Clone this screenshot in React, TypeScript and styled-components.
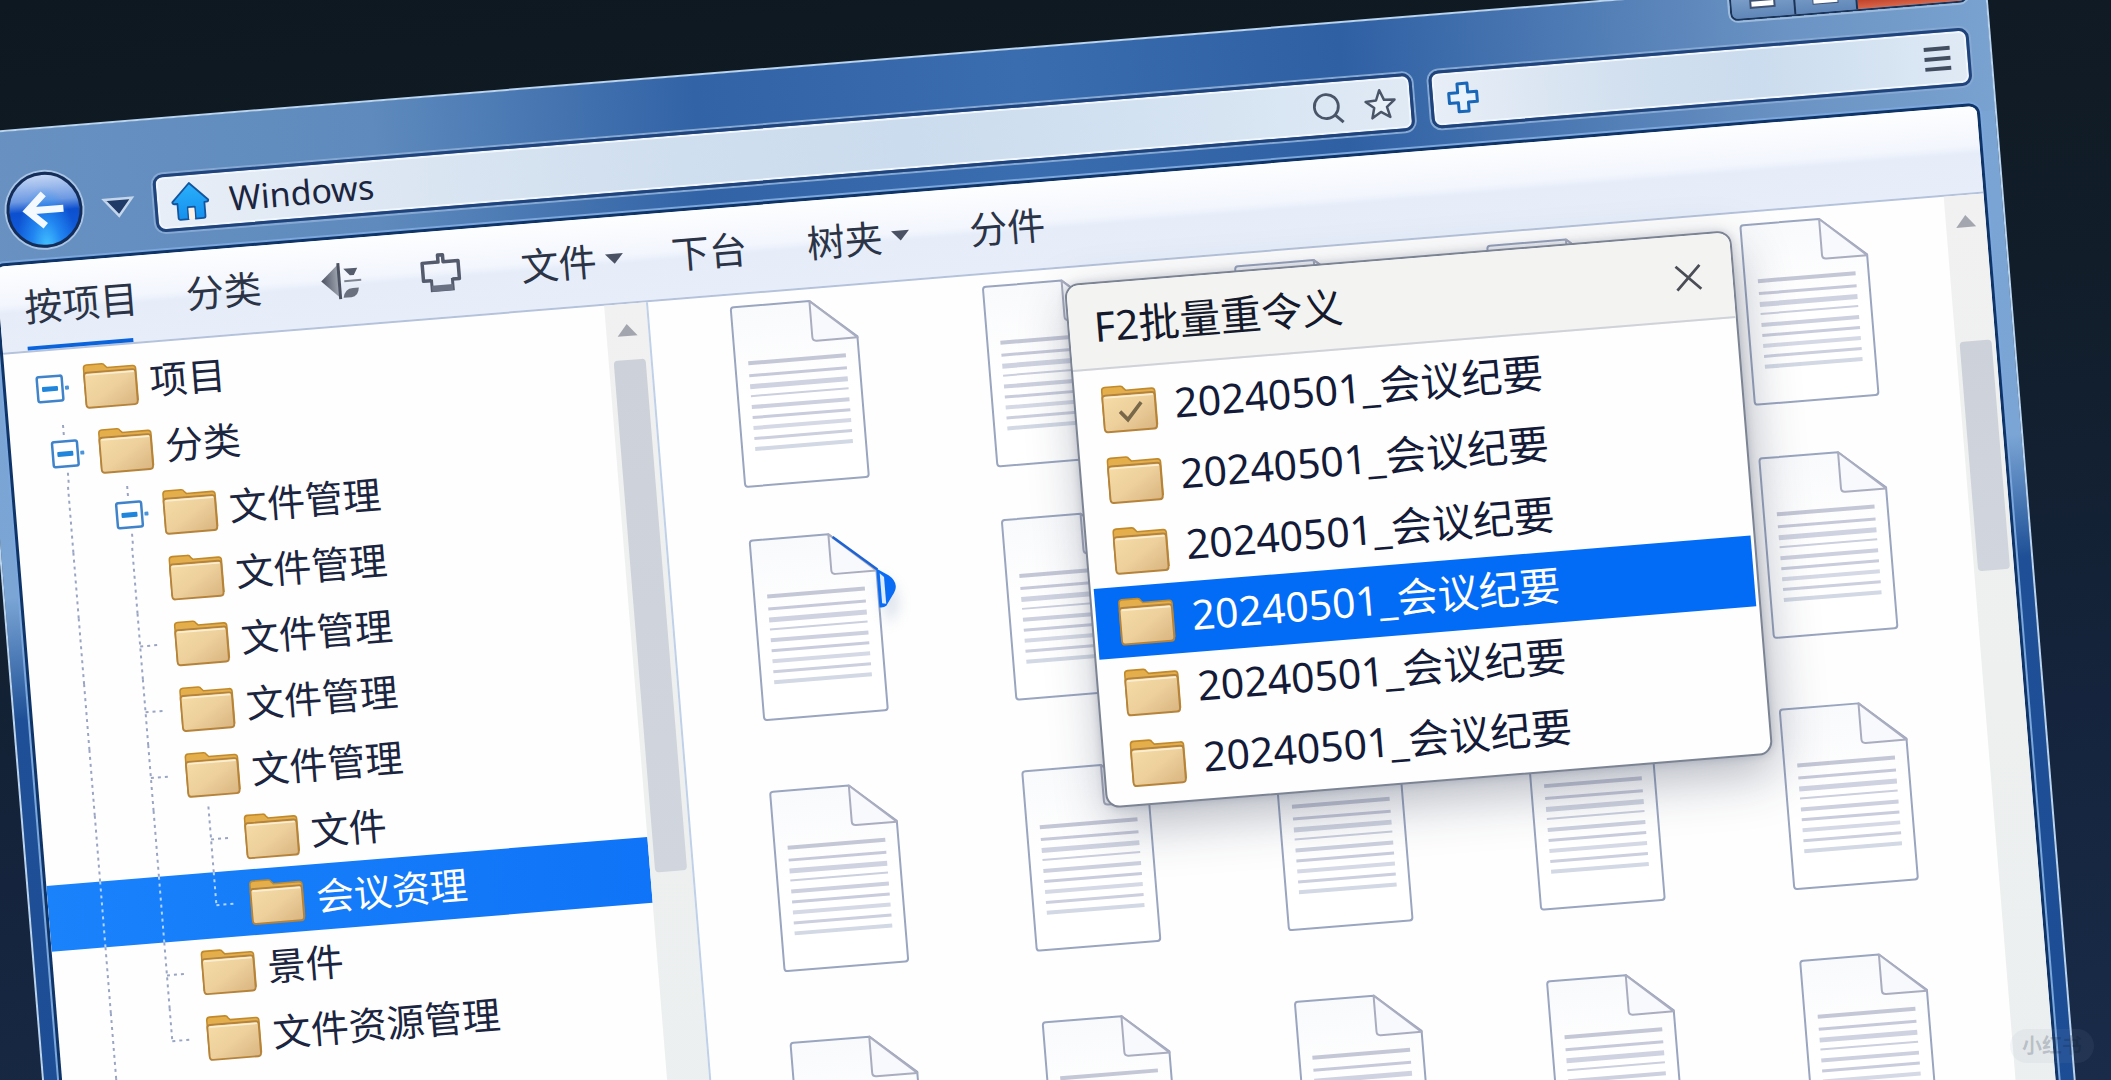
import React from "react";
import styled, { createGlobalStyle } from "styled-components";

const GlobalStyle = createGlobalStyle`
  * { box-sizing: border-box; }
  html, body { margin: 0; padding: 0; background: #131f2e; }
  body, button, input {
    font-family: "Noto Sans", "Noto Sans CJK SC", sans-serif;
    color: #1b2540;
  }
  button { background: none; border: 0; padding: 0; margin: 0; cursor: pointer; }
  ul { list-style: none; margin: 0; padding: 0; }
  svg { display: block; flex: none; overflow: visible; }
`;

const Desktop = styled.main`
  position: relative;
  height: 100vh;
  overflow: hidden;
  background: linear-gradient(175deg, #0e1820 0%, #111d29 35%, #15243c 70%, #192b49 100%);
`;

const Frame = styled.section`
  display: flex;
  flex-direction: column;
  width: 96vw;
  min-height: 110vh;
  margin: 133px 0 0 -35px;
  padding: 0 18px;
  transform-origin: 0 0;
  transform: rotate(-4.65deg);
  border: solid #b9d4f0;
  border-width: 2px 2px 0;
  background:
    linear-gradient(90deg, #6992c2 0%, #5e8abd 20%, #3263a6 36%, #3a6cb0 52%, #2f60a4 68%, #6b93c3 90%, #7aa2d0 100%) 0 0 / 100% 140px no-repeat,
    linear-gradient(180deg, #78a3d3 0%, #7aa5d5 38%, #1f5097 48%, #1c4d94 100%);
`;

const Caption = styled.header`
  display: flex;
  justify-content: flex-end;
  height: 30px;
  margin-bottom: 25px;
`;

const CaptionGroup = styled.div`
  display: flex;
  overflow: hidden;
  border: 2px solid #1b3357;
  border-top: 0;
  border-radius: 0 0 8px 8px;
  box-shadow: 0 0 0 2px #9dbbdc;
`;

const CaptionButton = styled.button<{ $danger?: boolean }>`
  display: grid;
  place-items: center;
  width: ${(p) => (p.$danger ? 110 : 62)}px;
  background: ${(p) => (p.$danger ? "linear-gradient(#e0907a, #c2452c 70%, #d8674c)" : "linear-gradient(#86a8cf, #5f86b8)")};
  & + & { border-left: 2px solid #1b3357; }
`;

const NavRow = styled.nav`
  display: flex;
  align-items: center;
  gap: 20px;
  height: 58px;
  margin-bottom: 21px;
  padding: 0 2px 0 15px;
`;

const BackButton = styled.button`
  display: grid;
  place-items: center;
  flex: none;
  width: 76px;
  height: 76px;
  margin-bottom: 6px;
  border: 3px solid #142c58;
  border-radius: 50%;
  box-shadow: 0 0 0 2px #a9c4e4;
  background:
    radial-gradient(ellipse at 50% 105%, #45c4ff 0%, rgba(40, 150, 250, 0.7) 30%, rgba(20, 90, 220, 0) 60%),
    linear-gradient(180deg, #c3d6f4 0%, #6d99e2 36%, #0c4fcf 52%, #1263e0 100%);
`;

const HistoryButton = styled.button`
  display: grid;
  place-items: center;
  flex: none;
  width: 32px;
  height: 32px;
`;

const Bars = styled.div`
  display: grid;
  flex: 1;
  grid-template-columns: minmax(0, 7fr) minmax(0, 3fr);
  gap: 17px;
`;

const Bar = styled.div`
  display: flex;
  align-items: center;
  gap: 20px;
  height: 58px;
  padding: 0 14px;
  border: 3px solid #1f437a;
  border-radius: 10px;
  box-shadow: 0 0 0 2px #86a9d3, inset 0 0 0 2px #f2f7fd;
  background: linear-gradient(90deg, #e8eef7 0%, #d2e0ef 35%, #cbdcee 60%, #d6e4f2 85%, #e0eaf5 100%);
`;

const BarInput = styled.input`
  flex: 1;
  min-width: 0;
  padding: 0;
  border: 0;
  outline: 0;
  background: transparent;
  font-size: 34px;
  line-height: 48px;
`;

const BarButton = styled.button`
  display: grid;
  place-items: center;
  width: 32px;
  height: 32px;
  flex: none;
`;

const Content = styled.div`
  display: flex;
  flex: 1;
  flex-direction: column;
  overflow: hidden;
  border-radius: 8px 8px 0 0;
  box-shadow: 0 0 0 3px #0f3468, 0 0 0 5px #7ba7dc;
  background: #fefefe;
`;

const Toolbar = styled.div`
  display: flex;
  align-items: stretch;
  height: 88px;
  flex: none;
  padding-left: 25px;
  border-bottom: 2px solid #b4c2db;
  background: linear-gradient(180deg, #fdfeff 0%, #f3f6fd 45%, #e6edf9 55%, #e7eefa 100%);
`;

const Tool = styled.button<{ $lead: number; $active?: boolean }>`
  display: flex;
  align-items: center;
  gap: 9px;
  margin-left: ${(p) => p.$lead}px;
  padding-bottom: 2px;
  font-size: 38px;
  line-height: 48px;
  color: #2b3447;
  background: ${(p) => (p.$active ? "linear-gradient(#0b63dc, #0b63dc) 0 100% / 106px 4px no-repeat" : "none")};
`;

const Body = styled.div`
  position: relative;
  display: flex;
  flex: 1;
  min-height: 0;
`;

const TreePane = styled.aside`
  flex: none;
  width: 603px;
  padding-top: 5px;
`;

const TreeRow = styled.li<{ $selected?: boolean }>`
  display: flex;
  align-items: center;
  height: 66px;
  background: ${(p) => (p.$selected ? "linear-gradient(90deg, #1a82fb, #0f74f7)" : "transparent")};
  color: ${(p) => (p.$selected ? "#fff" : "#1b2540")};
`;

const Expander = styled.button`
  flex: none;
  margin-right: 20px;
`;

const TreeLabel = styled.span`
  margin-left: 12px;
  padding-bottom: 2px;
  font-size: 38px;
  line-height: 48px;
  white-space: nowrap;
`;

const Scroll = styled.div<{ $width: number; $line?: boolean }>`
  display: flex;
  flex: none;
  flex-direction: column;
  align-items: center;
  width: ${(p) => p.$width}px;
  padding-top: 20px;
  gap: 24px;
  border-right: ${(p) => (p.$line ? "2px solid #bfd0e8" : "0")};
  background: linear-gradient(180deg, #f0f1f0, #ebefef);
`;

const Thumb = styled.div<{ $top: number; $length: number }>`
  width: 32px;
  height: ${(p) => p.$length}px;
  margin-top: ${(p) => p.$top}px;
  border-radius: 4px;
  background: linear-gradient(180deg, #cdd1d9, #d1d6de);
`;

const FilesPane = styled.div`
  flex: 1;
  min-width: 0;
  overflow: hidden;
`;

const FileGrid = styled.ul`
  display: grid;
  grid-template-columns: repeat(5, 126px);
  grid-auto-rows: 252px;
  grid-template-rows: 234px;
  justify-content: space-between;
  padding: 11px 80px 0 81px;
`;

const Dialog = styled.div`
  position: absolute;
  top: 16px;
  right: 255px;
  width: 669px;
  overflow: hidden;
  border: 2px solid #7c8494;
  border-radius: 14px;
  background: #fefefe;
  box-shadow: 4px 18px 50px rgba(40, 52, 78, 0.34), 0 0 8px rgba(40, 52, 78, 0.2);
`;

const DialogHead = styled.div`
  display: flex;
  align-items: center;
  justify-content: space-between;
  height: 86px;
  padding: 0 28px 0 25px;
  border-bottom: 2px solid #cfd2d8;
  background: #f3f3f2;
`;

const DialogTitle = styled.h1`
  margin: 0;
  font-size: 41px;
  font-weight: 400;
  line-height: 50px;
  color: #14192b;
`;

const DialogList = styled.ul`
  padding: 5px 3px;
`;

const DialogRow = styled.li<{ $selected?: boolean }>`
  display: flex;
  align-items: center;
  gap: 18px;
  height: 71px;
  padding-left: 23px;
  font-size: 41px;
  line-height: 50px;
  white-space: nowrap;
  background: ${(p) => (p.$selected ? "#036cf6" : "transparent")};
  color: ${(p) => (p.$selected ? "#fff" : "#141b38")};
`;

const RowText = styled.span`
  padding-bottom: 6px;
`;

const Watermark = styled.div`
  position: absolute;
  right: 17px;
  bottom: 17px;
  padding: 0 12px;
  border-radius: 17px;
  background: rgba(140, 160, 190, 0.09);
  color: rgba(8, 20, 44, 0.2);
  font-size: 20px;
  font-weight: 700;
  line-height: 34px;
`;

const Folder = ({ width = 54, height = 45, checked = false }: { width?: number; height?: number; checked?: boolean }) => (
  <svg width={width} height={height} viewBox="0 0 53 43" preserveAspectRatio="none" aria-hidden="true">
    <path d="M1 4Q1 1 4 1H19Q21 1 22 3L24 5H49Q52 5 52 8V38H1Z" fill="url(#folderTab)" stroke="#c08a2c" strokeWidth="1.5" />
    <path d="M1 11Q1 8.500 4 8.500H48.500Q51.500 8.500 51.500 11V39Q51.500 42 48.500 42H4Q1 42 1 39Z" fill="url(#folderFace)" stroke="#b5833a" strokeWidth="1.800" />
    <path d="M3 10.500H50" stroke="#fbeed2" strokeWidth="1.600" />
    {checked && <path d="M17 24L24 32L38 17" fill="none" stroke="#786749" strokeWidth="3.500" />}
  </svg>
);

const Minus = () => (
  <svg width="28" height="28" viewBox="0 0 28 28" aria-hidden="true">
    <rect x="1.500" y="1.500" width="25" height="25" rx="2" fill="#fff" stroke="#3f83cb" strokeWidth="2.500" />
    <rect x="6" y="11.500" width="16" height="5" rx="1" fill="#1f86dc" />
    <rect x="29" y="12" width="4" height="4" rx="1" fill="#4a94dc" />
  </svg>
);

type Guide = { x: number; from?: number; to?: number; stub?: boolean };

const Guides = ({ width, lines, light }: { width: number; lines: Guide[]; light?: boolean }) => (
  <svg width={width} height="66" viewBox={`0 0 ${width} 66`} aria-hidden="true">
    <g stroke={light ? "#b5d4fb" : "#9aa5c4"} strokeWidth="2" strokeDasharray="3 4" fill="none">
      {lines.map((l) => (
        <React.Fragment key={l.x}>
          <path d={`M${l.x} ${l.from ?? 0}V${l.to ?? 66}`} />
          {l.stub && <path d={`M${l.x} 33h20`} />}
        </React.Fragment>
      ))}
    </g>
  </svg>
);

const A = 54;
const B = 113;
const C = 168;

type Node = { label: string; indent: number; open?: boolean; selected?: boolean; lines: Guide[] };

const nodes: Node[] = [
  { label: "项目", indent: 30, open: true, lines: [] },
  { label: "分类", indent: 40, open: true, lines: [{ x: A, from: 4, to: 14 }, { x: A + 1, from: 52 }] },
  { label: "文件管理", indent: 99, open: true, lines: [{ x: A }, { x: B, from: 4, to: 16 }, { x: B + 1, from: 52 }] },
  { label: "文件管理", indent: 148, lines: [{ x: A }, { x: B }] },
  { label: "文件管理", indent: 148, lines: [{ x: A }, { x: B, stub: true }] },
  { label: "文件管理", indent: 148, lines: [{ x: A }, { x: B, stub: true }] },
  { label: "文件管理", indent: 148, lines: [{ x: A }, { x: B, stub: true }] },
  { label: "文件", indent: 202, lines: [{ x: A }, { x: B }, { x: C, stub: true }] },
  { label: "会议资理", indent: 202, selected: true, lines: [{ x: A }, { x: B }, { x: C, to: 33, stub: true }] },
  { label: "景件", indent: 148, lines: [{ x: A }, { x: B, stub: true }] },
  { label: "文件资源管理", indent: 148, lines: [{ x: A }, { x: B, to: 33, stub: true }] },
  { label: "", indent: 148, lines: [{ x: A }] },
];

const textLines = [
  [57, 4, "#c4c7d6"], [70, 3, "#c6c9d9"], [80, 5, "#cfd3e1"], [91, 2, "#cbcfde"], [101, 4, "#cdd1df"],
  [112, 3, "#c8ccdc"], [122, 4, "#d5d9e5"], [133, 3, "#cbcfde"], [143, 4, "#d2d8e4"],
] as const;

const Doc = ({ dragged = false }: { dragged?: boolean }) => (
  <svg width="126" height="182" viewBox="0 0 126 182" role="img" aria-label="document">
    <path d="M4 1H80L125 40V178Q125 181 122 181H4Q1 181 1 178V4Q1 1 4 1Z" fill="url(#paper)" stroke="#9aa5bf" strokeWidth="2" strokeLinejoin="round" />
    <path d="M80 1V37Q80 41 84 41H125Z" fill="#f7f9fc" stroke="#a9adbf" strokeWidth="2" strokeLinejoin="round" />
    {textLines.map(([y, h, fill]) => (
      <rect key={y} x="14" y={y - 1} width="98" height={h} fill={fill} />
    ))}
    {dragged && (
      <g>
        <path d="M126 46Q150 60 142 84L132 96Z" fill="#6b86b0" opacity="0.25" filter="url(#soft)" />
        <path d="M84 4L126 40" stroke="#1d63d6" strokeWidth="2.500" />
        <path d="M125 39L137 47Q143 52 143 58Q143 62 139 67L132 77Q129 79 125 78Z" fill="#0a6cf5" />
        <path d="M128 44V74L132 75V48Z" fill="#dcebff" />
      </g>
    )}
  </svg>
);

const Down = ({ width = 18, height = 10, fill = "#4a5264", stroke = "none" }: { width?: number; height?: number; fill?: string; stroke?: string }) => (
  <svg width={width} height={height} viewBox="0 0 18 10" preserveAspectRatio="none" aria-hidden="true">
    <path d="M0 0H18L9 10Z" fill={fill} stroke={stroke} strokeWidth="1.500" />
  </svg>
);

const Up = () => (
  <svg width="20" height="12" viewBox="0 0 20 12" aria-hidden="true">
    <path d="M10 0L20 12H0Z" fill="#a3a6ae" />
  </svg>
);

const dialogRows = [0, 1, 2, 3, 4, 5];
const docs = Array.from({ length: 20 }, (_, i) => i);

const Defs = styled.svg`
  position: absolute;
`;

export default function App() {
  return (
    <Desktop>
      <GlobalStyle />
      <Defs width="0" height="0" aria-hidden="true">
        <defs>
          <linearGradient id="folderTab" x1="0" y1="0" x2="0" y2="1">
            <stop offset="0" stopColor="#e6ae45" />
            <stop offset="0.3" stopColor="#e0ae58" />
          </linearGradient>
          <linearGradient id="folderFace" x1="0" y1="0" x2="1" y2="1">
            <stop offset="0" stopColor="#f6dca6" />
            <stop offset="0.5" stopColor="#edd09c" />
            <stop offset="1" stopColor="#d9b480" />
          </linearGradient>
          <linearGradient id="paper" x1="0" y1="0" x2="0" y2="1">
            <stop offset="0" stopColor="#f9fafc" />
            <stop offset="0.5" stopColor="#ffffff" />
          </linearGradient>
          <linearGradient id="house" x1="0" y1="0" x2="0" y2="1">
            <stop offset="0" stopColor="#2bb0fb" />
            <stop offset="1" stopColor="#1590ee" />
          </linearGradient>
          <linearGradient id="steel" x1="0" y1="0" x2="1" y2="0">
            <stop offset="0" stopColor="#4b5160" />
            <stop offset="1" stopColor="#a2a7b3" />
          </linearGradient>
          <filter id="soft" x="-100%" y="-100%" width="300%" height="300%">
            <feGaussianBlur stdDeviation="7" />
          </filter>
        </defs>
      </Defs>

      <Frame>
        <Caption>
          <CaptionGroup>
            <CaptionButton aria-label="Minimize">
              <svg width="26" height="9" viewBox="0 0 26 9"><rect x="1" y="1" width="24" height="7" fill="#fff" stroke="#3f5273" strokeWidth="2" /></svg>
            </CaptionButton>
            <CaptionButton aria-label="Maximize">
              <svg width="26" height="14" viewBox="0 0 26 14"><rect x="3" y="1" width="20" height="9" fill="#5c7ca8" stroke="#3f5273" strokeWidth="6" /><rect x="3" y="1" width="20" height="9" fill="none" stroke="#fff" strokeWidth="4" /></svg>
            </CaptionButton>
            <CaptionButton $danger aria-label="Close" />
          </CaptionGroup>
        </Caption>

        <NavRow>
          <BackButton aria-label="Back">
            <svg width="42" height="38" viewBox="0 0 42 38">
              <path d="M21 3L4 19L21 35M5 19H40" fill="none" stroke="#f4f9ff" strokeWidth="7" />
            </svg>
          </BackButton>
          <HistoryButton aria-label="History">
            <Down width={28} height={17} fill="#1f3a66" stroke="#c4d6ec" />
          </HistoryButton>
          <Bars>
            <Bar>
              <svg width="38" height="38" viewBox="0 0 38 38" aria-hidden="true">
                <path d="M19 1L37 19Q37 21 35 21H33V35Q33 37 31 37H23V25H16V37H8Q6 37 6 35V21H3Q1 21 1 19Z" fill="url(#house)" stroke="#14549c" strokeWidth="1.800" strokeLinejoin="round" />
                <rect x="16.500" y="26" width="6" height="11" fill="#fdf1e6" />
              </svg>
              <BarInput aria-label="Address" defaultValue="Windows" />
              <BarButton aria-label="Search">
                <svg width="32" height="32" viewBox="0 0 32 32"><circle cx="14" cy="14" r="12" fill="none" stroke="#4a5568" strokeWidth="2.800" /><path d="M22 23L30 31" stroke="#4a5568" strokeWidth="3" /></svg>
              </BarButton>
              <BarButton aria-label="Favorite">
                <svg width="32" height="32" viewBox="0 0 32 32"><path d="M16 2L20 12L30.500 12.600L22.400 19.300L25 29.500L16 23.800L7 29.500L9.600 19.300L1.500 12.600L12 12Z" fill="#e8f0f8" stroke="#4a5568" strokeWidth="2.500" strokeLinejoin="round" /></svg>
              </BarButton>
            </Bar>
            <Bar>
              <svg width="32" height="32" viewBox="0 0 32 32" aria-hidden="true">
                <path d="M11 2H21V11H30V21H21V30H11V21H2V11H11Z" fill="#e9f3fd" stroke="#1867b8" strokeWidth="3" strokeLinejoin="round" />
              </svg>
              <BarInput aria-label="Search box" />
              <BarButton aria-label="Menu">
                <svg width="26" height="24" viewBox="0 0 26 24"><path d="M0 2H26M0 12H26M0 22H26" stroke="#434d60" strokeWidth="4" /></svg>
              </BarButton>
            </Bar>
          </Bars>
        </NavRow>

        <Content>
          <Toolbar>
            <Tool $lead={0} $active>按项目</Tool>
            <Tool $lead={48}>分类</Tool>
            <Tool $lead={60} aria-label="Sort">
              <svg width="40" height="36" viewBox="0 0 40 36">
                <path d="M0 17L18 1V35Z" fill="url(#steel)" />
                <path d="M18 0V36" stroke="#4b5160" strokeWidth="3" />
                <path d="M23 6H37L33 13H29Z" fill="#555c6b" />
                <path d="M23 18.500H40" stroke="#7e8491" strokeWidth="2" />
                <path d="M21 35Q23 26 31 26H37Q36 35 29 35Z" fill="#6a707e" />
              </svg>
            </Tool>
            <Tool $lead={60} aria-label="Add-in">
              <svg width="40" height="38" viewBox="0 0 40 38">
                <path d="M10 26H2V8H18V1H23V8H38V26H31" fill="none" stroke="#535b6c" strokeWidth="3.500" strokeLinejoin="round" />
                <path d="M10 25V36H31V25" fill="none" stroke="#535b6c" strokeWidth="3" />
                <path d="M10 31H31V37H10Z" fill="#6a7183" />
              </svg>
            </Tool>
            <Tool $lead={60}>文件<Down /></Tool>
            <Tool $lead={48}>下台</Tool>
            <Tool $lead={60}>树夹<Down /></Tool>
            <Tool $lead={60}>分件</Tool>
          </Toolbar>

          <Body>
            <TreePane>
              <ul>
                {nodes.map((n, i) => (
                  <TreeRow key={i} $selected={n.selected}>
                    <Guides width={n.indent} lines={n.lines} light={n.selected} />
                    {n.open && <Expander aria-label={`Collapse ${n.label}`}><Minus /></Expander>}
                    {n.label && <Folder />}
                    {n.label && <TreeLabel>{n.label}</TreeLabel>}
                  </TreeRow>
                ))}
              </ul>
            </TreePane>
            <Scroll $width={44} $line>
              <Up />
              <Thumb $top={0} $length={513} />
            </Scroll>

            <FilesPane>
              <FileGrid>
                {docs.map((i) => (
                  <li key={i}><Doc dragged={i === 5} /></li>
                ))}
              </FileGrid>
            </FilesPane>
            <Scroll $width={40}>
              <Up />
              <Thumb $top={90} $length={230} />
            </Scroll>

            <Dialog role="dialog" aria-labelledby="rename-title">
              <DialogHead>
                <DialogTitle id="rename-title">F2批量重令义</DialogTitle>
                <BarButton aria-label="Close dialog">
                  <svg width="26" height="26" viewBox="0 0 26 26"><path d="M1 1L25 25M25 1L1 25" stroke="#4a4d55" strokeWidth="2.800" /></svg>
                </BarButton>
              </DialogHead>
              <DialogList>
                {dialogRows.map((i) => (
                  <DialogRow key={i} $selected={i === 3}>
                    <Folder width={55} height={47} checked={i === 0} />
                    <RowText>20240501_会议纪要</RowText>
                  </DialogRow>
                ))}
              </DialogList>
            </Dialog>
          </Body>
        </Content>
      </Frame>
      <Watermark>小红书</Watermark>
    </Desktop>
  );
}
